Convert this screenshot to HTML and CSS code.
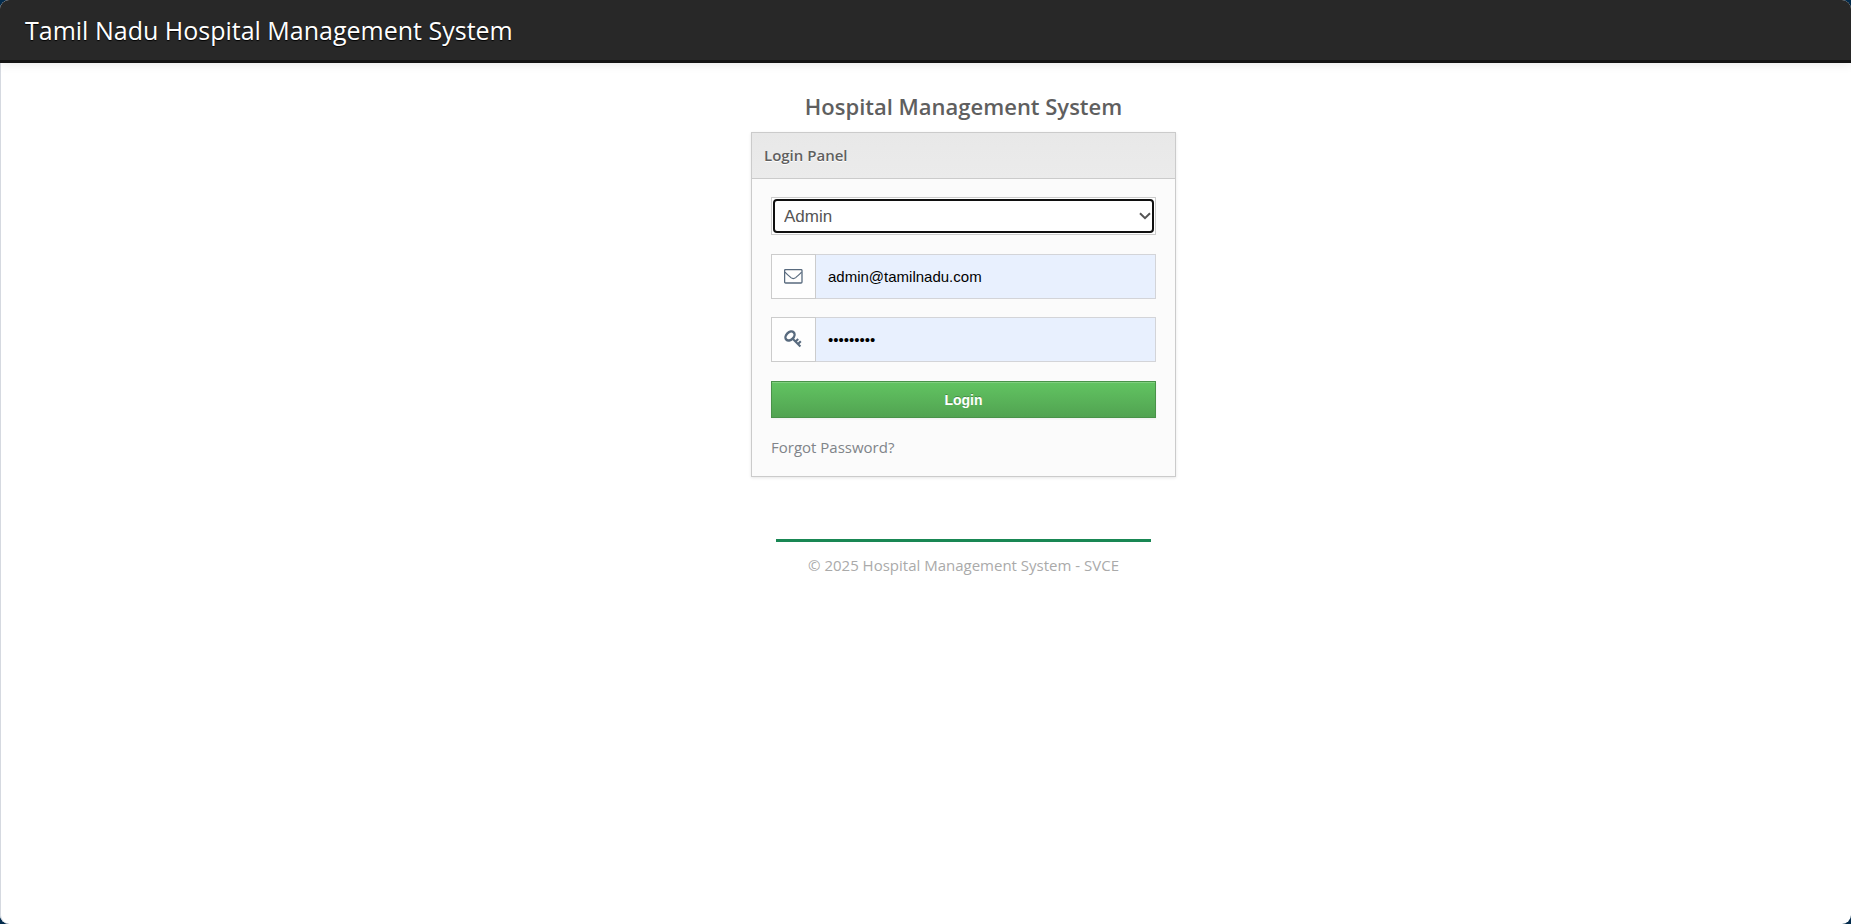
FILE: index.html
```html
<!DOCTYPE html>
<html lang="en">
<head>
<meta charset="utf-8">
<title>Tamil Nadu Hospital Management System</title>
<link rel="stylesheet" href="styles.css">
</head>
<body>
<div class="window">
  <header class="navbar">
    <a class="brand" href="#">Tamil Nadu Hospital Management System</a>
  </header>
  <main class="content">
    <div class="login">
      <h1 class="title">Hospital Management System</h1>
      <section class="box">
        <h2 class="box-header">Login Panel</h2>
        <form class="box-body">
          <div class="select-frame">
            <select class="role" aria-label="Account type">
              <option>Admin</option>
              <option>Doctor</option>
              <option>Patient</option>
            </select>
          </div>
          <div class="field">
            <label class="addon" for="email" aria-label="Email">
              <svg width="19" height="16" viewBox="0 0 19 16" fill="none" stroke="currentColor"><rect x="0.6" y="0.6" width="17.4" height="13.4" rx="1" stroke-width="1.3"/><path d="M1 3.2C2.2 4.8 4.8 6.6 6.9 8.6C8.6 10 10 10 11.7 8.6C13.8 6.6 16.4 4.8 17.6 3.2" stroke-width="1.2"/></svg>
            </label>
            <input class="input" id="email" type="email" value="admin@tamilnadu.com">
          </div>
          <div class="field">
            <label class="addon" for="password" aria-label="Password">
              <svg width="19" height="19" viewBox="0 0 19 19" fill="none" stroke="currentColor"><ellipse cx="6" cy="6" rx="5.2" ry="3.7" transform="rotate(-45 6 6)" stroke-width="2.4"/><path d="M8.2 8.2L16.4 16.4M11.6 11.6L14.2 9M14 14L16.8 11.2" stroke-width="2.1"/></svg>
            </label>
            <input class="input" id="password" type="password" value="tamilnadu">
          </div>
          <button class="submit" type="button">Login</button>
          <a class="forgot" href="#">Forgot Password?</a>
        </form>
      </section>
      <footer class="footer">© 2025 Hospital Management System - SVCE</footer>
    </div>
  </main>
</div>
</body>
</html>
```
FILE: styles.css
```css
* {
  box-sizing: border-box;
}

body {
  margin: 0;
  background: #032b4c;
  color: #5f5f5f;
  font: 15px/20px "Open Sans", sans-serif;
}

.window {
  min-height: 100vh;
  overflow: hidden;
  background: #fff;
  border-radius: 9px;
  box-shadow: inset 1px 0 #d5d9e0;
}

.navbar {
  padding: 15px 25px;
  background: #282828;
  border-bottom: 3px solid #131313;
  box-shadow: 0 1px 10px rgba(0, 0, 0, 0.1);
}

.brand {
  display: block;
  color: #fff;
  font-size: 25px;
  line-height: 30px;
  text-decoration: none;
  text-shadow: 0 1px 1px #000;
}

.content {
  display: flex;
  justify-content: center;
  padding: 28px 0 0 76px;
}

.login {
  width: 100%;
  max-width: 425px;
}

.title {
  margin: 0 0 11px;
  font-size: 22px;
  font-weight: 600;
  line-height: 30px;
  text-align: center;
}

.box {
  background: #fbfbfb;
  border: 1px solid #cbcbcb;
  box-shadow: 0 1px 3px rgba(0, 0, 0, 0.1);
}

.box-header {
  margin: 0;
  padding: 12px 12px 13px;
  background: linear-gradient(#e8e8e8, #ebebeb);
  border-bottom: 1px solid #cbcbcb;
  font-size: 15px;
  font-weight: 600;
  line-height: 20px;
  text-shadow: 0 1px #fff;
}

.box-body {
  display: flex;
  flex-direction: column;
  gap: 18px;
  padding: 18px 19px;
}

.select-frame {
  display: flex;
  margin-bottom: 1px;
  padding: 1px;
  background: #fff;
  border: 1px solid #ccc;
}

.role {
  flex: 1;
  height: 34px;
  padding: 0 20px 0 9px;
  appearance: none;
  background: #fff url("data:image/svg+xml,%3Csvg xmlns='http://www.w3.org/2000/svg' width='12' height='8' fill='none' stroke='%23555' stroke-width='2'%3E%3Cpath d='M1 1.2L6 6.2L11 1.2'/%3E%3C/svg%3E") no-repeat right 1px center;
  border: 2px solid #101010;
  border-radius: 4px;
  color: #555;
  font: 17px "Liberation Sans", Arial, sans-serif;
}

.field {
  display: flex;
  height: 45px;
}

.addon {
  display: flex;
  align-items: center;
  justify-content: center;
  width: 45px;
  background: #fefefe;
  border: 1px solid #ccc;
  color: #586a7e;
}

.input {
  flex: 1;
  min-width: 0;
  padding: 0 12px;
  background: #e8f0fe;
  border: 1px solid #d3d4d8;
  border-left: 0;
  border-radius: 0;
  color: #000;
  font: 15px "Liberation Sans", Arial, sans-serif;
}

.submit {
  height: 37px;
  margin-top: 1px;
  padding: 0;
  background: linear-gradient(#62c462, #51a351);
  border: 1px solid #499249;
  box-shadow: inset 0 1px rgba(255, 255, 255, 0.2), 0 1px 2px rgba(0, 0, 0, 0.05);
  color: #fff;
  font: bold 14px "Liberation Sans", Arial, sans-serif;
  text-shadow: 0 -1px rgba(0, 0, 0, 0.25);
}

.forgot {
  align-self: flex-start;
  color: #808489;
  line-height: 22px;
  text-decoration: none;
}

.footer {
  margin: 62px 25px 0;
  padding-top: 13px;
  border-top: 3px solid #198754;
  color: #aaa;
  text-align: center;
}
```
